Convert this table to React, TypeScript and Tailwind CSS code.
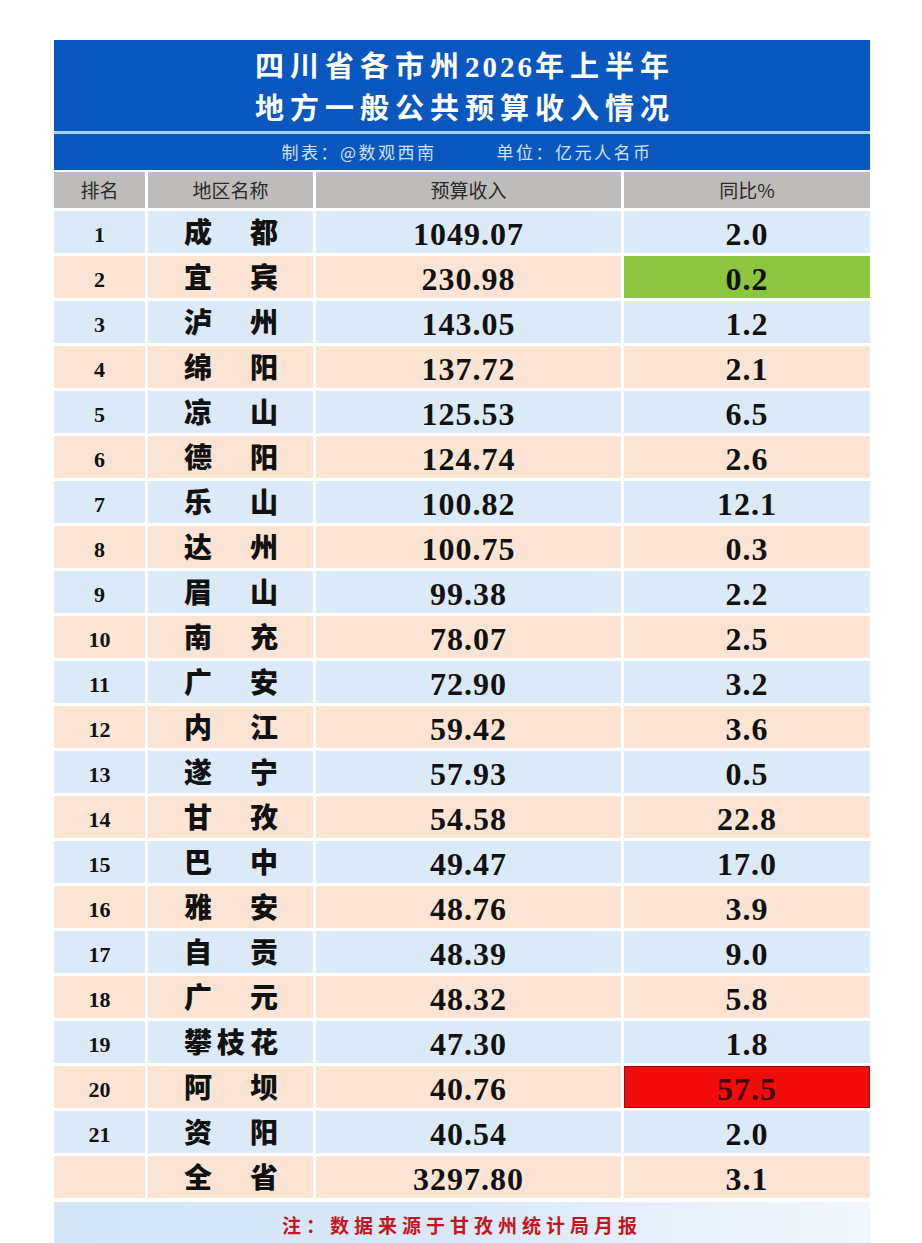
const rows = [
  { rank: "1", name: "成　都", income: "1049.07", yoy: "2.0" },
  { rank: "2", name: "宜　宾", income: "230.98", yoy: "0.2", mark: "green" },
  { rank: "3", name: "泸　州", income: "143.05", yoy: "1.2" },
  { rank: "4", name: "绵　阳", income: "137.72", yoy: "2.1" },
  { rank: "5", name: "凉　山", income: "125.53", yoy: "6.5" },
  { rank: "6", name: "德　阳", income: "124.74", yoy: "2.6" },
  { rank: "7", name: "乐　山", income: "100.82", yoy: "12.1" },
  { rank: "8", name: "达　州", income: "100.75", yoy: "0.3" },
  { rank: "9", name: "眉　山", income: "99.38", yoy: "2.2" },
  { rank: "10", name: "南　充", income: "78.07", yoy: "2.5" },
  { rank: "11", name: "广　安", income: "72.90", yoy: "3.2" },
  { rank: "12", name: "内　江", income: "59.42", yoy: "3.6" },
  { rank: "13", name: "遂　宁", income: "57.93", yoy: "0.5" },
  { rank: "14", name: "甘　孜", income: "54.58", yoy: "22.8" },
  { rank: "15", name: "巴　中", income: "49.47", yoy: "17.0" },
  { rank: "16", name: "雅　安", income: "48.76", yoy: "3.9" },
  { rank: "17", name: "自　贡", income: "48.39", yoy: "9.0" },
  { rank: "18", name: "广　元", income: "48.32", yoy: "5.8" },
  { rank: "19", name: "攀枝花", income: "47.30", yoy: "1.8" },
  { rank: "20", name: "阿　坝", income: "40.76", yoy: "57.5", mark: "red" },
  { rank: "21", name: "资　阳", income: "40.54", yoy: "2.0" },
  { rank: "", name: "全　省", income: "3297.80", yoy: "3.1" },
];

const font = "font-['Liberation_Serif','Noto_Sans_CJK_SC',serif]";

export default function App() {
  return (
    <div className="min-h-[1243px] bg-white pt-[40px]">
      <div className={`ml-[54px] w-[816px] ${font}`}>
        {/* title */}
        <div className="bg-[#0b57c0] pt-[6px] pb-[1px] pl-[6px] text-center text-[29px] font-bold leading-[42px] tracking-[6px] text-white">
          <div>
            四川省各市州<span className="tracking-[3px]">2026</span>年上半年
          </div>
          <div>地方一般公共预算收入情况</div>
        </div>
        <div className="h-[3px] bg-[#a3d1f4]" />
        <div className="flex h-[36px] items-center justify-center gap-[60px] bg-[#0b57c0] pl-[10px] font-['Noto_Sans_CJK_SC',sans-serif] text-[17px] tracking-[2.5px] text-[#d2e2f4]">
          <span>制表：@数观西南</span>
          <span>单位：亿元人名币</span>
        </div>

        {/* table */}
        <div className="mt-[2px] grid grid-cols-[91px_165px_305px_246px] gap-[3px]">
          {["排名", "地区名称", "预算收入", "同比%"].map((h) => (
            <div
              key={h}
              className="flex h-[36px] items-center justify-center bg-[#bdbcbb] font-['Noto_Sans_CJK_SC',sans-serif] text-[19px] text-[#2a2a2a]"
            >
              {h}
            </div>
          ))}
          {rows.map((r, i) => {
            const bg = i % 2 === 0 ? "bg-[#dce9f6]" : "bg-[#fce4d4]";
            const yoyBg =
              r.mark === "green"
                ? "bg-[#8cc63f]"
                : r.mark === "red"
                  ? "bg-[#f20c0c] border border-[#9a0a0a] text-[#3e0606]"
                  : bg;
            return (
              <div key={i} className="contents text-[#111] font-bold">
                <div className={`flex h-[42px] items-center justify-center pt-[4px] text-[22px] ${bg}`}>
                  {r.rank}
                </div>
                <div className={`flex h-[42px] items-center justify-center pt-[3px] pl-[6px] font-black text-[28px] tracking-[5px] ${bg}`}>
                  {r.name}
                </div>
                <div className={`flex h-[42px] items-center justify-center pt-[4px] text-[32px] tracking-[1px] ${bg}`}>
                  {r.income}
                </div>
                <div className={`flex h-[42px] items-center justify-center pt-[4px] text-[32px] tracking-[1px] ${yoyBg}`}>
                  {r.yoy}
                </div>
              </div>
            );
          })}
        </div>

        {/* footer */}
        <div className="mt-[4px] flex h-[46px] items-center justify-center bg-linear-to-r from-[#d4e5f6] via-[#d9e8f7] to-[#f2f7fc] font-['Noto_Sans_CJK_SC',sans-serif] text-[19px] font-bold tracking-[5px] text-[#c4161f]">
          注：数据来源于甘孜州统计局月报
        </div>
      </div>
    </div>
  );
}
